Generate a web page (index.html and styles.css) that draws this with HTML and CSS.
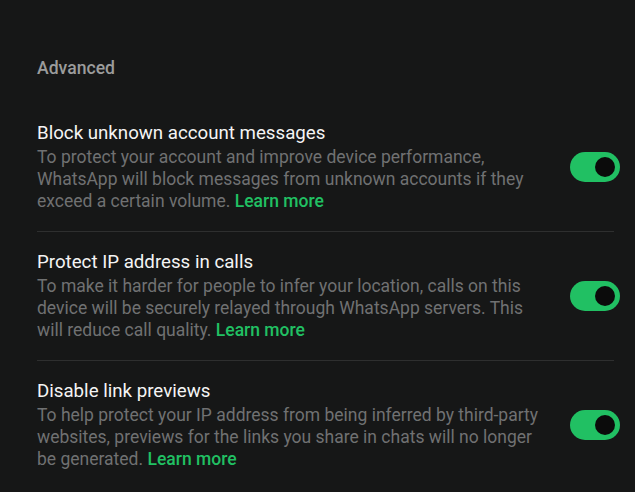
FILE: index.html
```html
<!DOCTYPE html>
<html>
<head>
<meta charset="utf-8">
<link rel="stylesheet" href="styles.css">
</head>
<body>
<div class="panel">
  <div class="section-title">Advanced</div>
  <div class="list">
    <div class="row">
      <div class="text">
        <div class="title">Block unknown account messages</div>
        <div class="desc">To protect your account and improve device performance, WhatsApp will block messages from unknown accounts if they exceed a certain volume. <a class="link">Learn more</a></div>
      </div>
      <div class="toggle"><span class="knob"></span></div>
    </div>
    <div class="row">
      <div class="text">
        <div class="title">Protect IP address in calls</div>
        <div class="desc">To make it harder for people to infer your location, calls on this device will be securely relayed through WhatsApp servers. This will reduce call quality. <a class="link">Learn more</a></div>
      </div>
      <div class="toggle"><span class="knob"></span></div>
    </div>
    <div class="row">
      <div class="text">
        <div class="title">Disable link previews</div>
        <div class="desc">To help protect your IP address from being inferred by third-party websites, previews for the links you share in chats will no longer be generated. <a class="link">Learn more</a></div>
      </div>
      <div class="toggle"><span class="knob"></span></div>
    </div>
  </div>
</div>
</body>
</html>
```

FILE: styles.css
```css
html, body {
  margin: 0;
  padding: 0;
  background: #161717;
}
body {
  font-family: Roboto, "Noto Sans", sans-serif;
  width: 635px;
  height: 492px;
  overflow: hidden;
}
.panel {
  padding: 56px 21px 0 37px;
}
.section-title {
  font-size: 17.6px;
  font-weight: 500;
  line-height: 24px;
  color: #9b9c9c;
}
.list {
  margin-top: 23px;
}
.row {
  display: flex;
  align-items: center;
  padding: 18px 0 19px 0;
  border-bottom: 1px solid #2e2f2f;
}
.row:last-child {
  border-bottom: none;
}
.text {
  flex: 1;
  padding-right: 25px;
}
.title {
  font-size: 18.7px;
  line-height: 24px;
  color: #f4f4f4;
}
.desc {
  margin-top: 1px;
  font-size: 17.5px;
  line-height: 22px;
  color: #707172;
}
.link {
  color: #21c063;
  font-weight: 500;
}
.toggle {
  width: 50px;
  height: 30px;
  border-radius: 15px;
  background: #21c063;
  display: flex;
  align-items: center;
  justify-content: flex-end;
  padding-right: 5px;
  box-sizing: border-box;
  flex-shrink: 0;
  margin-right: -6px;
}
.knob {
  width: 20px;
  height: 20px;
  border-radius: 50%;
  background: #0b0b0b;
}
```
